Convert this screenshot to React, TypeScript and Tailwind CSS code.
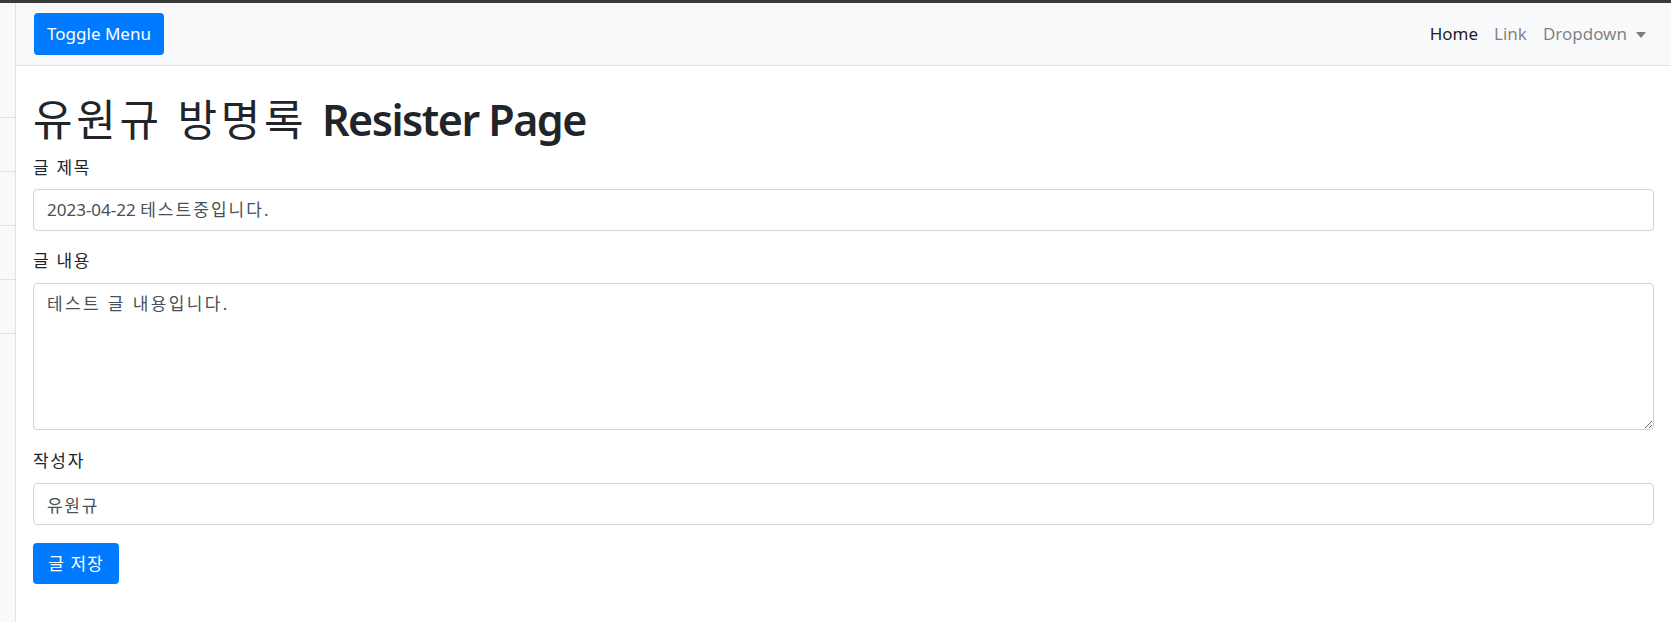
const font = { fontFamily: '"Noto Sans", "Noto Sans CJK KR", sans-serif' };

const label = "mb-[9px] block h-[25px] text-[17px] leading-[25px] tracking-[0.1em] text-[#212529]";
const box = "block w-full rounded-[4px] border border-[#ced4da] bg-white px-[13px] text-[17px] text-[#495057] outline-none";

export default function App() {
  return (
    <div className="flex h-[622px] w-full flex-col bg-white text-[#212529]" style={font}>
      <div className="h-[3px] bg-[#3a3a3a]" />
      <div className="flex flex-1">
        <aside className="flex w-[16px] flex-col border-r border-[#dee2e6] bg-[#f8f9fa]">
          <div className="h-[115px] border-b border-[#dee2e6]" />
          <div className="h-[54px] border-b border-[#dee2e6]" />
          <div className="h-[54px] border-b border-[#dee2e6]" />
          <div className="h-[54px] border-b border-[#dee2e6]" />
          <div className="h-[54px] border-b border-[#dee2e6]" />
        </aside>

        <main className="flex-1">
          <nav className="flex h-[63px] items-center justify-between border-b border-[#dee2e6] bg-[#f8f9fa] pl-[18px] pr-[17px]">
            <button className="h-[42px] w-[130px] rounded-[4px] bg-[#007bff] text-[17px] text-white">Toggle Menu</button>
            <ul className="flex items-center text-[17px]">
              <li className="px-[8px] text-black/90">Home</li>
              <li className="px-[8px] text-black/50">Link</li>
              <li className="flex items-center px-[8px] text-black/50">
                Dropdown
                <span className="ml-[9px] mt-[1px] h-0 w-0 border-x-[5px] border-t-[6px] border-x-transparent border-t-black/50" />
              </li>
            </ul>
          </nav>

          <div className="px-[17px]">
            <h1 className="mb-[10px] mt-[28px] h-[51px] whitespace-nowrap text-[43px] leading-[51px]">
              <span className="font-normal tracking-[0.085em]">유원규 방명록 </span>
              <span className="font-semibold tracking-[-0.035em]">Resister Page</span>
            </h1>
            <form>
              <label className={label}>글 제목</label>
              <div className={`${box} mb-[17px] h-[42px] whitespace-pre leading-[40px]`}>
                2023-04-22 <span className="tracking-[0.12em]">테스트중입니다.</span>
              </div>
              <label className={`${label} mb-[10px]`}>글 내용</label>
              <textarea
                readOnly
                value="테스트 글 내용입니다."
                className={`${box} mb-[18px] h-[147px] py-[7px] leading-[25px] tracking-[0.14em]`}
              />
              <label className={`${label} mb-[10px]`}>작성자</label>
              <input readOnly value="유원규" className={`${box} mb-[18px] h-[42px] tracking-[0.1em]`} />
              <button
                type="button"
                className="h-[41px] w-[86px] rounded-[4px] bg-[#007bff] text-[17px] tracking-[0.06em] text-white"
              >
                글 저장
              </button>
            </form>
          </div>
        </main>
      </div>
    </div>
  );
}
